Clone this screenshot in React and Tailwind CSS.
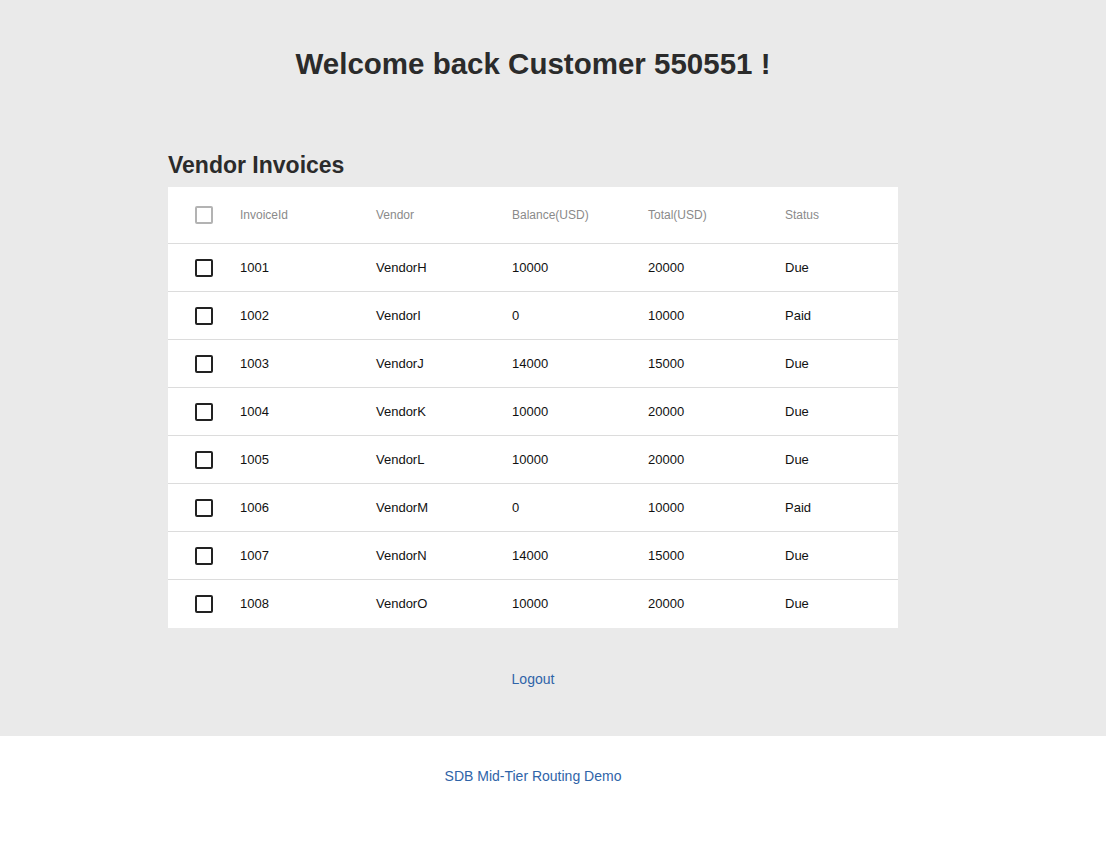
const invoices = [
  { id: 1001, vendor: 'VendorH', balance: 10000, total: 20000, status: 'Due' },
  { id: 1002, vendor: 'VendorI', balance: 0, total: 10000, status: 'Paid' },
  { id: 1003, vendor: 'VendorJ', balance: 14000, total: 15000, status: 'Due' },
  { id: 1004, vendor: 'VendorK', balance: 10000, total: 20000, status: 'Due' },
  { id: 1005, vendor: 'VendorL', balance: 10000, total: 20000, status: 'Due' },
  { id: 1006, vendor: 'VendorM', balance: 0, total: 10000, status: 'Paid' },
  { id: 1007, vendor: 'VendorN', balance: 14000, total: 15000, status: 'Due' },
  { id: 1008, vendor: 'VendorO', balance: 10000, total: 20000, status: 'Due' },
]

function Box({ muted }) {
  return (
    <span
      className={
        'block w-[18px] h-[18px] rounded-[2px] border-2 ' +
        (muted ? 'border-[#b3b3b3]' : 'border-[#222]')
      }
    />
  )
}

export default function App() {
  return (
    <div className="min-h-[844px] bg-white font-['Liberation_Sans',Arial,sans-serif] text-[#222]">
      {/* main area */}
      <div className="bg-[#eaeaea] h-[736px] pr-[40px]">
        <h1 className="pt-[44px] text-center text-[29.5px] leading-[40px] font-semibold text-[#2b2b2b]">
          Welcome back Customer 550551 !
        </h1>

        <div className="w-[730px] mx-auto mt-[66px]">
          <h2 className="text-[23px] leading-[30px] font-semibold text-[#2b2b2b] mb-[7px]">Vendor Invoices</h2>

          <div className="bg-white">
            {/* header */}
            <div className="flex items-center h-[57px] border-b border-[#dcdcdc] text-[12px] text-[#8a8a8a]">
              <div className="w-[72px] pl-[27px]">
                <Box muted />
              </div>
              <div className="w-[136px]">InvoiceId</div>
              <div className="w-[136px]">Vendor</div>
              <div className="w-[136px]">Balance(USD)</div>
              <div className="w-[137px]">Total(USD)</div>
              <div className="flex-1">Status</div>
            </div>

            {invoices.map((inv, i) => (
              <div
                key={inv.id}
                className={
                  'flex items-center h-[48px] text-[13px] text-[#111] ' +
                  (i < invoices.length - 1 ? 'border-b border-[#dcdcdc]' : '')
                }
              >
                <div className="w-[72px] pl-[27px]">
                  <Box />
                </div>
                <div className="w-[136px]">{inv.id}</div>
                <div className="w-[136px]">{inv.vendor}</div>
                <div className="w-[136px]">{inv.balance}</div>
                <div className="w-[137px]">{inv.total}</div>
                <div className="flex-1">{inv.status}</div>
              </div>
            ))}
          </div>

          <div className="text-center mt-[39px]">
            <a href="#" className="text-[14px] leading-[20px] text-[#2f64a8]">Logout</a>
          </div>
        </div>
      </div>

      {/* footer */}
      <div className="pr-[40px] pt-[28px] text-center">
        <a href="#" className="text-[14px] leading-[20px] text-[#2f64a8]">SDB Mid-Tier Routing Demo</a>
      </div>
    </div>
  )
}
